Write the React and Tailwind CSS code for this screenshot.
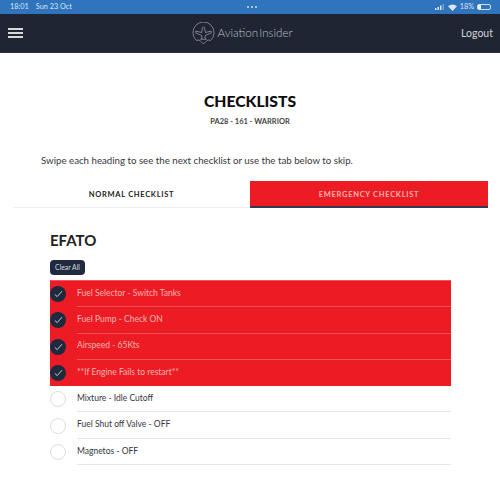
const font = { fontFamily: '"Lato", "Liberation Sans", sans-serif' };

function Check() {
  return (
    <svg width="9" height="8" viewBox="0 0 9 8" fill="none" stroke="#d5d8de" strokeWidth="0.9">
      <path d="M0.8 4.4 L3.2 6.6 L8 1.2" />
    </svg>
  );
}

function Logo() {
  return (
    <svg width="23" height="23" viewBox="0 0 24 24" fill="none" stroke="#a9adb5" strokeWidth="0.7">
      <path d="M5 19.5 A11 11 0 1 1 19 19.5" />
      <path d="M5 19.5 Q7 18 8.5 19.5 Q10 21 12 23 Q14 21 15.5 19.5 Q17 18 19 19.5" />
      <path d="M4 9.5 L10 11 L11 6 Q12 4 13 6 L14 11 L20 9.5 L20 11.5 L14 14 L13.5 17 L15 18 L9 18 L10.5 17 L10 14 L4 11.5 Z" />
    </svg>
  );
}

function Row({ text, done, last }) {
  return (
    <div className={`flex items-center h-[26.3px] ${done ? "bg-[#ed1c24]" : ""}`}>
      <div className={`w-4 h-4 rounded-full flex items-center justify-center shrink-0 ${done ? "bg-[#1f2a3f]" : "border border-[#dddddd] bg-white"}`}>
        {done && <Check />}
      </div>
      <div className={`ml-[11px] flex-1 h-full flex items-center pb-[1px] border-b ${done ? (last ? "border-transparent text-[#f8b4b0]" : "border-[#f2545a] text-[#f8b4b0]") : "border-[#e8e8e8] text-[#33363d]"} text-[8.5px]`}>
        {text}
      </div>
    </div>
  );
}

export default function App() {
  const done = ["Fuel Selector - Switch Tanks", "Fuel Pump - Check ON", "Airspeed - 65Kts", "**If Engine Fails to restart**"];
  const todo = ["Mixture - Idle Cutoff", "Fuel Shut off Valve - OFF", "Magnetos - OFF"];
  return (
    <div className="w-[500px] h-[485px] bg-white overflow-hidden" style={font}>
      <div className="h-[14px] bg-[#2f74bd] flex items-center justify-between pl-[10px] pr-[9px] text-[7.3px] text-[#dbe7f5]">
        <div className="flex gap-[7px]"><span>18:01</span><span>Sun 23 Oct</span></div>
        <div className="flex gap-[2px] ml-[-2px]">
          <div className="w-[2px] h-[2px] rounded-full bg-[#cfe0f3]" />
          <div className="w-[2px] h-[2px] rounded-full bg-[#cfe0f3]" />
          <div className="w-[2px] h-[2px] rounded-full bg-[#cfe0f3]" />
        </div>
        <div className="flex items-center gap-[3px]">
          <svg width="10" height="6" viewBox="0 0 10 6" fill="#dbe7f5"><rect x="0" y="4" width="1.5" height="2" /><rect x="2.5" y="3" width="1.5" height="3" /><rect x="5" y="1.5" width="1.5" height="4.5" /><rect x="7.5" y="0" width="1.5" height="6" opacity="0.4" /></svg>
          <svg width="9" height="7" viewBox="0 0 9 7" fill="#dbe7f5"><path d="M4.5 7 L0 2.2 Q4.5 -1.2 9 2.2 Z" /></svg>
          <span>18%</span>
          <div className="w-[14px] h-[6px] rounded-[2px] border border-[#cfe0f3] flex">
            <div className="w-[3px] bg-[#e8f0fa]" />
          </div>
        </div>
      </div>
      <nav className="h-[39px] bg-[#1f2533] flex items-center justify-between pl-[8px] pr-[7px] border-b border-[#2a3040]">
        <div className="flex flex-col gap-[2.5px] w-[15px]">
          <div className="h-[1.5px] bg-[#d8d8d8]" />
          <div className="h-[1.5px] bg-[#d8d8d8]" />
          <div className="h-[1.5px] bg-[#d8d8d8]" />
        </div>
        <div className="flex items-center text-[#bcc0c6] text-[11.6px] font-light">
          <Logo />
          <span className="ml-[3px]">Aviation</span><span className="ml-[1px]">Insider</span>
        </div>
        <span className="text-[#d2d4d8] text-[10.5px] pt-[1px]">Logout</span>
      </nav>
      <main>
        <h1 className="mt-[40px] text-center text-[15.7px] leading-[16px] font-black text-[#0d0d0d]">CHECKLISTS</h1>
        <p className="mt-[8px] text-center text-[7.5px] leading-[10px] font-bold text-[#444]">PA28 - 161 - WARRIOR</p>
        <p className="mt-[27px] ml-[41px] text-[9.7px] leading-[12px] text-[#35383d]">Swipe each heading to see the next checklist or use the tab below to skip.</p>
        <div className="mt-[15px] ml-[13px] w-[475px] flex h-[27px] text-[7.5px] font-bold tracking-[0.7px]">
          <div className="flex-1 flex items-center justify-center pt-[2px] text-[#222] border-b border-[#eeeeee]">NORMAL CHECKLIST</div>
          <div className="w-[238px] flex items-center justify-center pt-[2px] bg-[#ed1c24] text-[#f8b4b0] border-b-2 border-[#353a52]">EMERGENCY CHECKLIST</div>
        </div>
        <div className="ml-[50px] w-[401px]">
          <h2 className="mt-[23px] text-[15px] leading-[18px] font-bold text-[#222]">EFATO</h2>
          <button className="block mt-[11px] h-[15px] w-[35px] rounded-[4px] bg-[#1f2a3f] text-[#d8dae0] text-[6.8px] text-center">Clear All</button>
          <div className="mt-[5px] border-t border-[#f2545a]" />
          <div>
            {done.map((t, i) => <Row key={t} text={t} done last={i === 3} />)}
            {todo.map((t) => <Row key={t} text={t} />)}
          </div>
        </div>
      </main>
    </div>
  );
}
